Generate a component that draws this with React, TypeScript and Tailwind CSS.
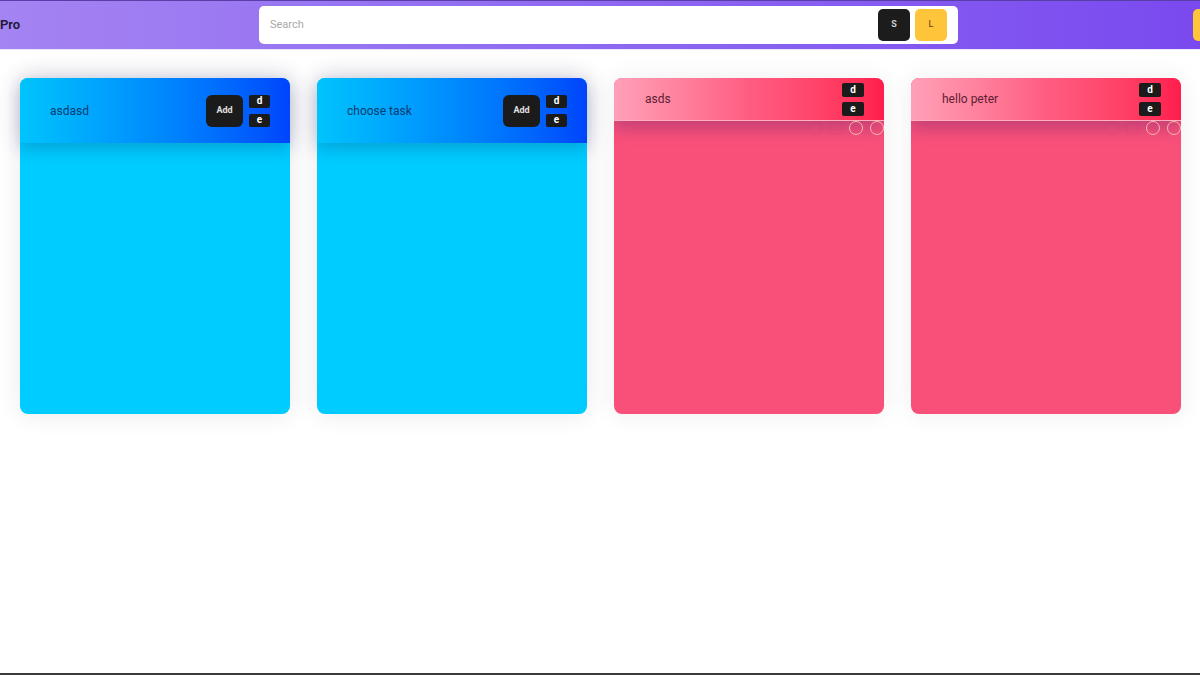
import React from "react";

function BlueCard({ title }: { title: string }) {
  return (
    <div className="relative w-[270px] h-[336px] rounded-[8px] bg-[#00ccff] shadow-[0_0_24px_rgba(40,40,80,0.10)]">
      <div className="relative z-10 h-[65px] rounded-t-[8px] bg-gradient-to-r from-[#00c4fc] to-[#0044fb] flex items-center pl-[30px] pr-[20px] shadow-[0_6px_14px_rgba(0,60,120,0.18),0_0_24px_rgba(60,60,110,0.18)]">
        <span className="text-[12px] text-[#0b3a70] flex-1">{title}</span>
        <div className="w-[37px] h-[32px] rounded-[6px] bg-[#1b1b1b] flex items-center justify-center text-[9px] font-bold text-[#e0e0e0]">
          Add
        </div>
        <div className="ml-[6px] flex flex-col gap-[6px]">
          <div className="w-[21px] h-[13px] rounded-[2px] bg-[#1b1b1b] flex items-center justify-center text-[10px] font-bold text-white leading-none">
            d
          </div>
          <div className="w-[21px] h-[13px] rounded-[2px] bg-[#1b1b1b] flex items-center justify-center text-[10px] font-bold text-white leading-none">
            e
          </div>
        </div>
      </div>
    </div>
  );
}

function PinkCard({ title }: { title: string }) {
  return (
    <div className="relative w-[270px] h-[336px] rounded-[8px] bg-[#f9507a] shadow-[0_0_24px_rgba(40,40,80,0.08)] overflow-hidden">
      <div className="relative z-10 h-[43px] rounded-t-[8px] bg-gradient-to-r from-[#ffa0b8] via-[#ff5c82] to-[#ff1c4d] flex items-center pl-[31px] pr-[20px] border-b border-[#ffb0c0] shadow-[0_8px_16px_rgba(110,40,110,0.38)]">
        <span className="text-[12px] text-[#5e2034] flex-1">{title}</span>
        <div className="flex flex-col gap-[5px]">
          <div className="w-[22px] h-[14px] rounded-[2px] bg-[#1b1b1b] flex items-center justify-center text-[10px] font-bold text-white leading-none">
            d
          </div>
          <div className="w-[22px] h-[14px] rounded-[2px] bg-[#1b1b1b] flex items-center justify-center text-[10px] font-bold text-white leading-none">
            e
          </div>
        </div>
      </div>
      <div className="absolute z-20 top-[43px] left-[194px] w-[14px] h-[14px] rounded-full border border-[rgba(150,50,100,0.12)]" />
      <div className="absolute z-20 top-[43px] left-[215px] w-[14px] h-[14px] rounded-full border border-[rgba(150,50,100,0.12)]" />
      <div className="absolute z-20 top-[43px] left-[235px] w-[14px] h-[14px] rounded-full border border-[#f6b8b0]" />
      <div className="absolute z-20 top-[43px] left-[256px] w-[14px] h-[14px] rounded-full border border-[#f6b8b0]" />
    </div>
  );
}

export default function App() {
  return (
    <div
      className="w-[1200px] h-[675px] bg-white flex flex-col overflow-hidden"
      style={{ fontFamily: "Roboto, 'Liberation Sans', sans-serif" }}
    >
      <header className="h-[50px] shrink-0 border-t border-[#5a3ea8] border-b border-b-[#ece6fb] bg-gradient-to-r from-[#a483f2] to-[#7a49ef] flex items-center overflow-hidden">
        <div className="w-[259px] shrink-0 text-[13px] font-semibold text-[#1d1736]">Pro</div>
        <div className="w-[699px] h-[38px] shrink-0 bg-white rounded-[5px] flex items-center pl-[11px] pr-[11px]">
          <span className="flex-1 text-[11px] text-[#a8a8a8]">Search</span>
          <div className="w-[32px] h-[32px] rounded-[5px] bg-[#1c1c1c] flex items-center justify-center text-[9px] font-bold text-[#cfcfcf]">
            S
          </div>
          <div className="ml-[5px] w-[32px] h-[32px] rounded-[5px] bg-[#fec43a] flex items-center justify-center text-[9px] text-[#5a4010]">
            L
          </div>
        </div>
        <div className="ml-[235px] w-[32px] h-[32px] shrink-0 rounded-[5px] bg-[#fec43a]" />
      </header>
      <main className="flex gap-[27px] pl-[20px] pt-[28px]">
        <BlueCard title="asdasd" />
        <BlueCard title="choose task" />
        <PinkCard title="asds" />
        <PinkCard title="hello peter" />
      </main>
      <div className="mt-auto h-[2px] shrink-0 bg-[#3a3a3a]" />
    </div>
  );
}
